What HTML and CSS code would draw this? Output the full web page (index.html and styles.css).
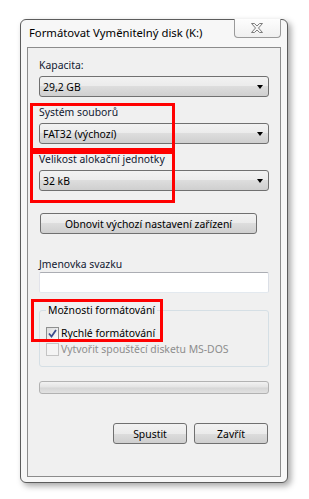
FILE: index.html
```html
<!DOCTYPE html>
<html lang="cs">
<head>
    <meta charset="UTF-8">
    <meta name="viewport" content="width=device-width, initial-scale=1.0">
    <title>Formátovat Vyměnitelný disk (K:)</title>
    <link rel="stylesheet" href="styles.css">
</head>
<body>
    <div class="window">
        <div class="titlebar">
            <span class="title">Formátovat Vyměnitelný disk (K:)</span>
            <button type="button" class="close">
                <svg width="12" height="10" viewBox="0 0 12 10">
                    <polygon points="0.5,0.5 3.5,0.5 6,3 8.5,0.5 11.5,0.5 7.5,5 11.5,9.5 8.5,9.5 6,7 3.5,9.5 0.5,9.5 4.5,5" fill="#f4f4f4" stroke="#7d7d7d" stroke-width="1" stroke-linejoin="round"/>
                </svg>
            </button>
        </div>
        <div class="panel">
            <label class="label">Kapacita:</label>
            <div class="combo"><span>29,2 GB</span><span class="arrow"></span></div>

            <label class="label">Systém souborů</label>
            <div class="combo"><span>FAT32 (výchozí)</span><span class="arrow"></span></div>

            <label class="label">Velikost alokační jednotky</label>
            <div class="combo"><span>32 kB</span><span class="arrow"></span></div>

            <button type="button" class="btn btn-defaults">Obnovit výchozí nastavení zařízení</button>

            <label class="label label-tight" for="volume">Jmenovka svazku</label>
            <input type="text" id="volume" class="textbox">

            <fieldset class="group">
                <legend>Možnosti formátování</legend>
                <div class="check-row">
                    <span class="checkbox checked">
                        <svg width="9" height="9" viewBox="0 0 9 9">
                            <path d="M1 4.5 L3.5 7.5 L8 1" fill="none" stroke="#3b4c8c" stroke-width="1.8"/>
                        </svg>
                    </span>
                    <span>Rychlé formátování</span>
                </div>
                <div class="check-row disabled">
                    <span class="checkbox"></span>
                    <span>Vytvořit spouštěcí disketu MS-DOS</span>
                </div>
            </fieldset>

            <div class="progress"></div>

            <div class="actions">
                <button type="button" class="btn">Spustit</button>
                <button type="button" class="btn">Zavřít</button>
            </div>
        </div>
    </div>

    <div class="mark mark-fs"></div>
    <div class="mark mark-unit"></div>
    <div class="mark mark-quick"></div>
</body>
</html>
```

FILE: styles.css
```css
body {
    margin: 0;
    width: 309px;
    height: 499px;
    position: relative;
    background-color: #fff;
    font-family: "Noto Sans", "Open Sans", sans-serif;
    font-size: 10.4px;
    color: #000;
    overflow: hidden;
}
.window {
    box-sizing: border-box;
    width: 268px;
    height: 464px;
    margin: 19px 0 0 20px;
    border: 1px solid #5c5c5c;
    border-radius: 6px;
    background-color: #f7f7f7;
    box-shadow: 3px 3px 6px rgba(0,0,0,0.35);
    display: flex;
    flex-direction: column;
}
.titlebar {
    height: 27px;
    display: flex;
    justify-content: space-between;
    align-items: flex-start;
    padding: 0 6px 0 8px;
}
.title {
    line-height: 16px;
    margin-top: 5px;
    font-size: 11.3px;
}
.close {
    box-sizing: border-box;
    width: 47px;
    height: 19px;
    margin-top: -1px;
    padding: 0 2px 0 0;
    border: 1px solid #9a9a9a;
    border-top: none;
    border-radius: 0 0 4px 4px;
    background: linear-gradient(#fdfdfd, #f0f0f0);
    display: flex;
    align-items: center;
    justify-content: center;
}
.panel {
    box-sizing: border-box;
    height: 430px;
    margin: 0 6px;
    border: 1px solid #8c8c8c;
    background-color: #f0f0f0;
    padding: 9px 11px 0 11px;
}
.label {
    display: block;
    line-height: 16px;
    margin: 7px 0 3px;
    color: #101830;
}
.panel > .label:first-child {
    margin-top: 0;
}
.label-tight {
    margin: 22px 0 0;
}
.combo {
    box-sizing: border-box;
    height: 21px;
    width: 230px;
    border: 1px solid #707070;
    border-radius: 3px;
    background: linear-gradient(#f2f2f2 0%, #ebebeb 50%, #dddddd 50%, #cfcfcf 100%);
    display: flex;
    align-items: center;
    justify-content: space-between;
    padding: 0 5px 0 3px;
    line-height: 16px;
}
.arrow {
    width: 0;
    height: 0;
    border-left: 3.5px solid transparent;
    border-right: 3.5px solid transparent;
    border-top: 4px solid #000;
}
.btn {
    box-sizing: border-box;
    height: 21px;
    width: 74px;
    padding: 0;
    border: 1px solid #707070;
    border-radius: 3px;
    background: linear-gradient(#f2f2f2 0%, #ebebeb 50%, #dddddd 50%, #cfcfcf 100%);
    font-family: inherit;
    font-size: 10.4px;
    color: #000;
}
.btn-defaults {
    display: block;
    width: 217px;
    margin: 22px 0 0 1px;
}
.textbox {
    box-sizing: border-box;
    display: block;
    width: 230px;
    height: 21px;
    margin: 0;
    border: 1px solid;
    border-color: #abadb3 #dbdfe6 #e3e9ef #e2e3ea;
    border-radius: 2px;
    background-color: #fff;
}
.group {
    box-sizing: border-box;
    width: 230px;
    margin: 9px 0 0;
    padding: 0 0 9px 6px;
    border: 1px solid #d5dfe5;
    border-radius: 3px;
}
.group legend {
    padding: 0 2px;
    line-height: 16px;
}
.check-row {
    display: flex;
    align-items: center;
    gap: 2px;
    line-height: 16px;
}
.check-row:first-of-type {
    margin-top: 7px;
}
.checkbox {
    box-sizing: border-box;
    width: 13px;
    height: 13px;
    border: 1px solid #8e8f8f;
    background: linear-gradient(135deg, #dcdcdc, #fbfbfb);
    display: flex;
    align-items: center;
    justify-content: center;
}
.disabled {
    color: #8d8d8d;
}
.disabled .checkbox {
    border-color: #c4c4c4;
    background: #f4f4f4;
}
.progress {
    box-sizing: border-box;
    width: 230px;
    height: 13px;
    margin-top: 14px;
    border: 1px solid #b2b2b2;
    border-radius: 3px;
    background: linear-gradient(#f2f2f2, #e4e4e4 45%, #d6d6d6 55%, #e2e2e2);
}
.actions {
    display: flex;
    justify-content: flex-end;
    gap: 7px;
    margin: 29px 1px 0 0;
}
.mark {
    position: absolute;
    box-sizing: border-box;
    border: 3px solid #ff0000;
}
.mark-fs {
    left: 30px;
    top: 103px;
    width: 145px;
    height: 48px;
}
.mark-unit {
    left: 30px;
    top: 151px;
    width: 145px;
    height: 52px;
}
.mark-quick {
    left: 31px;
    top: 299px;
    width: 132px;
    height: 43px;
}
```
